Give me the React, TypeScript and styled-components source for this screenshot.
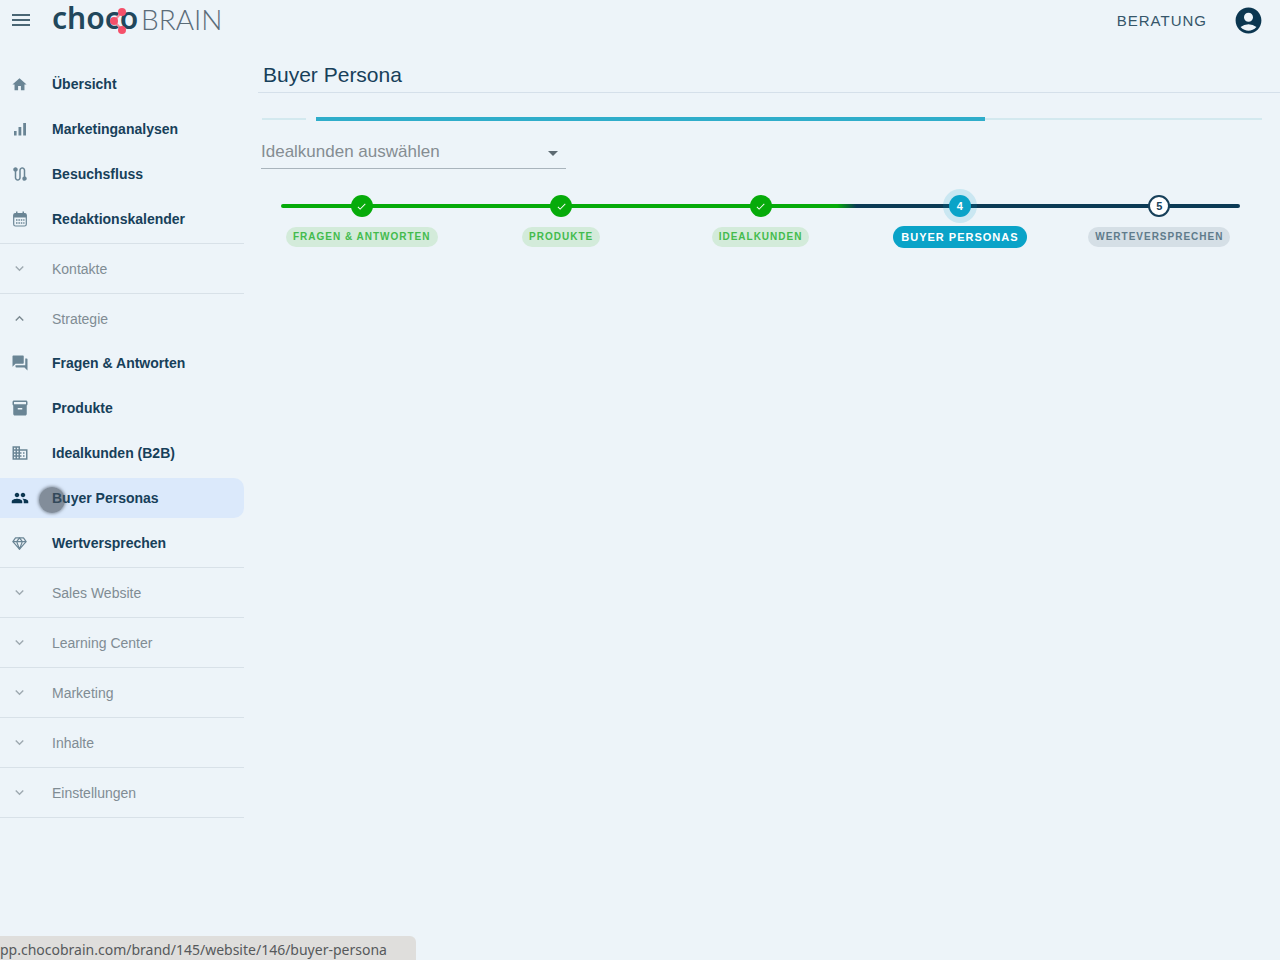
import React from "react";
import styled, { createGlobalStyle, css } from "styled-components";
import {
  MdAccountCircle,
  MdArrowDropDown,
  MdBusiness,
  MdCheck,
  MdExpandLess,
  MdExpandMore,
  MdForum,
  MdHome,
  MdInventory2,
  MdMenu,
  MdPeople,
  MdRoute,
} from "react-icons/md";
import type { IconType } from "react-icons";

const navy = "#17405a";
const teal = "#0aa3c8";
const green = "#06ab0a";
const sans = `"Liberation Sans", Arial, sans-serif`;

const GlobalStyle = createGlobalStyle`
  *, *::before, *::after { box-sizing: border-box; }
  body {
    margin: 0;
    min-height: 100vh;
    background: #edf4f9;
    color: ${navy};
    font-family: ${sans};
  }
  button, select { font: inherit; color: inherit; }
`;

const TopBar = styled.header`
  display: flex;
  align-items: center;
  height: 40px;
  padding: 0 16px 0 9px;
`;

const IconButton = styled.button`
  display: flex;
  padding: 0;
  border: 0;
  background: none;
  cursor: pointer;
`;

const LogoLink = styled.a`
  display: flex;
  margin-left: 19px;
`;

const Consulting = styled.a`
  margin-left: auto;
  margin-right: 26px;
  color: #35566a;
  font-size: 15px;
  letter-spacing: 1px;
  text-decoration: none;
`;

const Body = styled.div`
  display: flex;
  align-items: flex-start;
`;

const Sidebar = styled.nav`
  flex: none;
  width: 244px;
  padding-top: 24px;
`;

const Group = styled.div`
  border-bottom: 1px solid #d8e1e8;
`;

const NavList = styled.ul`
  display: grid;
  gap: 5px;
  margin: 0;
  padding: 0 0 4px;
  list-style: none;
`;

const rowLayout = css`
  display: flex;
  align-items: center;
  gap: 22px;
  width: 100%;
  padding: 0 9px;
  font-size: 14px;
  text-align: left;
`;

const IconSlot = styled.span`
  flex: none;
  display: flex;
  justify-content: center;
  width: 21px;
`;

const NavLink = styled.a<{ $active?: boolean }>`
  ${rowLayout}
  position: relative;
  height: 40px;
  border-radius: 0 10px 10px 0;
  background: ${(p) => (p.$active ? "#dbe9fb" : "transparent")};
  color: ${navy};
  font-weight: bold;
  text-decoration: none;
  svg { color: ${(p) => (p.$active ? "#0b3650" : "#6a8595")}; }
`;

const SectionButton = styled.button<{ $open: boolean }>`
  ${rowLayout}
  height: 49px;
  border: 0;
  background: none;
  color: #808c94;
  cursor: pointer;
  svg { color: ${(p) => (p.$open ? "#7b8991" : "#9faab1")}; }
`;

const Pointer = styled.span`
  position: absolute;
  left: 39px;
  top: 9px;
  width: 26px;
  height: 26px;
  border-radius: 50%;
  background: rgba(70, 80, 90, 0.6);
  box-shadow: 0 0 3px 1px rgba(70, 80, 90, 0.5);
`;

const Main = styled.main`
  flex: 1;
  min-width: 0;
  padding-left: 14px;
`;

const Title = styled.h1`
  margin: 0;
  padding: 22px 5px 4px;
  border-bottom: 1px solid #d5e0ea;
  font-size: 21px;
  line-height: 26px;
  font-weight: normal;
`;

const Content = styled.div`
  padding: 24px 18px 0 4px;
`;

const Progress = styled.div`
  display: flex;
  height: 4px;
`;

const Buffer = styled.span<{ $grow: number }>`
  flex: ${(p) => p.$grow} 1 0;
  height: 2px;
  margin-top: 1px;
  background: #d3e9ef;
`;

const Bar = styled.span`
  flex: 669 1 0;
  margin-left: 10px;
  background: #2fadca;
`;

const SelectField = styled.label`
  position: relative;
  display: block;
  width: 305px;
  margin-top: 13px;
  margin-left: -1px;
  color: #858d92;
  svg {
    position: absolute;
    right: 1px;
    top: 7px;
    color: #5d6a72;
    pointer-events: none;
  }
`;

const Select = styled.select`
  width: 100%;
  height: 35px;
  padding: 0;
  border: 0;
  border-bottom: 1px solid #a9b4bc;
  border-radius: 0;
  background: none;
  font-size: 17px;
  appearance: none;
`;

const Steps = styled.ol`
  position: relative;
  display: flex;
  margin: 22px 3px 0 0;
  padding: 0;
  list-style: none;
  &::before {
    content: "";
    position: absolute;
    left: 19px;
    right: 19px;
    top: 13px;
    height: 4px;
    border-radius: 2px;
    background: linear-gradient(to right, ${green} 58%, #0b3a55 60%);
  }
`;

type State = "done" | "current" | "open";

const Step = styled.li`
  position: relative;
  flex: 1 1 0;
  display: flex;
  flex-direction: column;
  align-items: center;
`;

const Dot = styled.span<{ $state: State }>`
  display: flex;
  align-items: center;
  justify-content: center;
  width: 22px;
  height: 22px;
  margin: 4px 0;
  border-radius: 50%;
  font-size: 11px;
  font-weight: bold;
  color: #fff;
  ${(p) =>
    p.$state === "done" &&
    css`
      background: ${green};
    `}
  ${(p) =>
    p.$state === "current" &&
    css`
      background: ${teal};
      box-shadow: 0 0 0 6px rgba(10, 163, 200, 0.15);
    `}
  ${(p) =>
    p.$state === "open" &&
    css`
      border: 2px solid ${navy};
      background: #fff;
      color: ${navy};
    `}
`;

const pill = {
  done: css`
    background: #d3ebda;
    color: #43bb4d;
  `,
  current: css`
    background: ${teal};
    color: #fff;
    font-size: 11px;
  `,
  open: css`
    background: #d5dfe6;
    color: #5f7b8b;
  `,
};

const LabelRow = styled.span`
  display: flex;
  align-items: center;
  height: 32px;
`;

const StepLabel = styled.a<{ $state: State }>`
  padding: ${(p) => (p.$state === "current" ? "1px 8px" : "0 7px")};
  border-radius: 11px;
  font-size: 10px;
  line-height: 20px;
  font-weight: bold;
  letter-spacing: 1px;
  text-decoration: none;
  white-space: nowrap;
  ${(p) => pill[p.$state]}
`;

const StatusBar = styled.div`
  position: fixed;
  left: 0;
  bottom: 0;
  height: 24px;
  padding-right: 29px;
  border-top-right-radius: 6px;
  background: #dfdedc;
  color: #56595b;
  font-family: "Noto Sans", sans-serif;
  font-size: 14px;
  line-height: 28px;
`;

type IconProps = { size?: number };

const SignalBars = ({ size }: IconProps) => (
  <svg width={size} height={size} viewBox="0 0 18 18" fill="currentColor" aria-hidden="true">
    <path d="M3 11h2.6v4.500H3zM7.500 7h2.800v8.500H7.500zM12.200 3H15v12.500h-2.800z" />
  </svg>
);

const Calendar = ({ size }: IconProps) => (
  <svg width={size} height={size} viewBox="0 0 18 18" aria-hidden="true">
    <rect x="2.700" y="3.500" width="12.600" height="12.500" rx="1.800" fill="none" stroke="currentColor" strokeWidth="1.200" />
    <path d="M2.700 7.500V5a1.800 1.800 0 0 1 1.800-1.800h9A1.800 1.800 0 0 1 15.300 5v2.500zM5 1.500h1.500v3H5zM11.500 1.500H13v3h-1.500z" fill="currentColor" />
    <path d="M5 10h8.500M5 13h8.500" stroke="currentColor" strokeWidth="1.400" strokeDasharray="1.500 0.900" />
  </svg>
);

const Gem = ({ size }: IconProps) => (
  <svg width={size} height={size} viewBox="0 0 18 18" fill="none" stroke="currentColor" strokeWidth="1.300" strokeLinejoin="round" aria-hidden="true">
    <path d="M4.800 3h8.400L16 7l-7 8-7-8z" />
    <path d="M2 7h14M6 7l3-4 3 4-3 8z" />
  </svg>
);

const Logo = () => (
  <svg width="172" height="40" viewBox="0 0 172 40" role="img" aria-label="chocoBRAIN">
    <text x="0" y="29" fontFamily="Noto Sans, sans-serif" fontWeight="600" fontSize="30" fill="#21475c">
      choco
    </text>
    <text x="89" y="30" fontFamily="Lato, sans-serif" fontWeight="300" fontSize="28" fill="#5b6c78">
      BRAIN
    </text>
    <path d="M70 12 62 21l8 9" fill="none" stroke="#f58a9b" strokeWidth="2" />
    <g fill="#f5506a">
      <circle cx="70" cy="12" r="4" />
      <circle cx="62" cy="21" r="4" />
      <circle cx="70" cy="30" r="4" />
    </g>
  </svg>
);

type Item = {
  label: string;
  icon: IconType | React.FC<IconProps>;
  size: number;
  active?: boolean;
};

const overview: Item[] = [
  { label: "Übersicht", icon: MdHome, size: 17 },
  { label: "Marketinganalysen", icon: SignalBars, size: 18 },
  { label: "Besuchsfluss", icon: MdRoute, size: 18 },
  { label: "Redaktionskalender", icon: Calendar, size: 18 },
];

const strategy: Item[] = [
  { label: "Fragen & Antworten", icon: MdForum, size: 18 },
  { label: "Produkte", icon: MdInventory2, size: 18 },
  { label: "Idealkunden (B2B)", icon: MdBusiness, size: 18 },
  { label: "Buyer Personas", icon: MdPeople, size: 18, active: true },
  { label: "Wertversprechen", icon: Gem, size: 17 },
];

const sections = ["Sales Website", "Learning Center", "Marketing", "Inhalte", "Einstellungen"];

const steps: { label: string; state: State }[] = [
  { label: "FRAGEN & ANTWORTEN", state: "done" },
  { label: "PRODUKTE", state: "done" },
  { label: "IDEALKUNDEN", state: "done" },
  { label: "BUYER PERSONAS", state: "current" },
  { label: "WERTEVERSPRECHEN", state: "open" },
];

const Items = ({ items }: { items: Item[] }) => (
  <NavList>
    {items.map(({ label, icon: Icon, size, active }) => (
      <li key={label}>
        <NavLink href="#" $active={active} aria-current={active ? "page" : undefined}>
          <IconSlot>
            <Icon size={size} />
          </IconSlot>
          {label}
          {active && <Pointer />}
        </NavLink>
      </li>
    ))}
  </NavList>
);

const Section = ({ label, items }: { label: string; items?: Item[] }) => (
  <Group>
    <SectionButton type="button" $open={!!items} aria-expanded={!!items}>
      <IconSlot>{items ? <MdExpandLess size={17} /> : <MdExpandMore size={17} />}</IconSlot>
      {label}
    </SectionButton>
    {items && <Items items={items} />}
  </Group>
);

export default function App() {
  return (
    <>
      <GlobalStyle />
      <TopBar>
        <IconButton type="button" aria-label="Menü">
          <MdMenu size={24} color="#4a6675" />
        </IconButton>
        <LogoLink href="#">
          <Logo />
        </LogoLink>
        <Consulting href="#">BERATUNG</Consulting>
        <IconButton type="button" aria-label="Konto">
          <MdAccountCircle size={31} color="#0b3650" />
        </IconButton>
      </TopBar>
      <Body>
        <Sidebar>
          <Group>
            <Items items={overview} />
          </Group>
          <Section label="Kontakte" />
          <Section label="Strategie" items={strategy} />
          {sections.map((label) => (
            <Section key={label} label={label} />
          ))}
        </Sidebar>
        <Main>
          <Title>Buyer Persona</Title>
          <Content>
            <Progress role="progressbar" aria-label="Laden">
              <Buffer $grow={44} />
              <Bar />
              <Buffer $grow={277} />
            </Progress>
            <SelectField>
              <Select aria-label="Idealkunden auswählen">
                <option>Idealkunden auswählen</option>
              </Select>
              <MdArrowDropDown size={24} />
            </SelectField>
            <Steps>
              {steps.map(({ label, state }, i) => (
                <Step key={label}>
                  <Dot $state={state}>{state === "done" ? <MdCheck size={11} /> : i + 1}</Dot>
                  <LabelRow>
                    <StepLabel href="#" $state={state}>
                      {label}
                    </StepLabel>
                  </LabelRow>
                </Step>
              ))}
            </Steps>
          </Content>
        </Main>
      </Body>
      <StatusBar>pp.chocobrain.com/brand/145/website/146/buyer-persona</StatusBar>
    </>
  );
}
